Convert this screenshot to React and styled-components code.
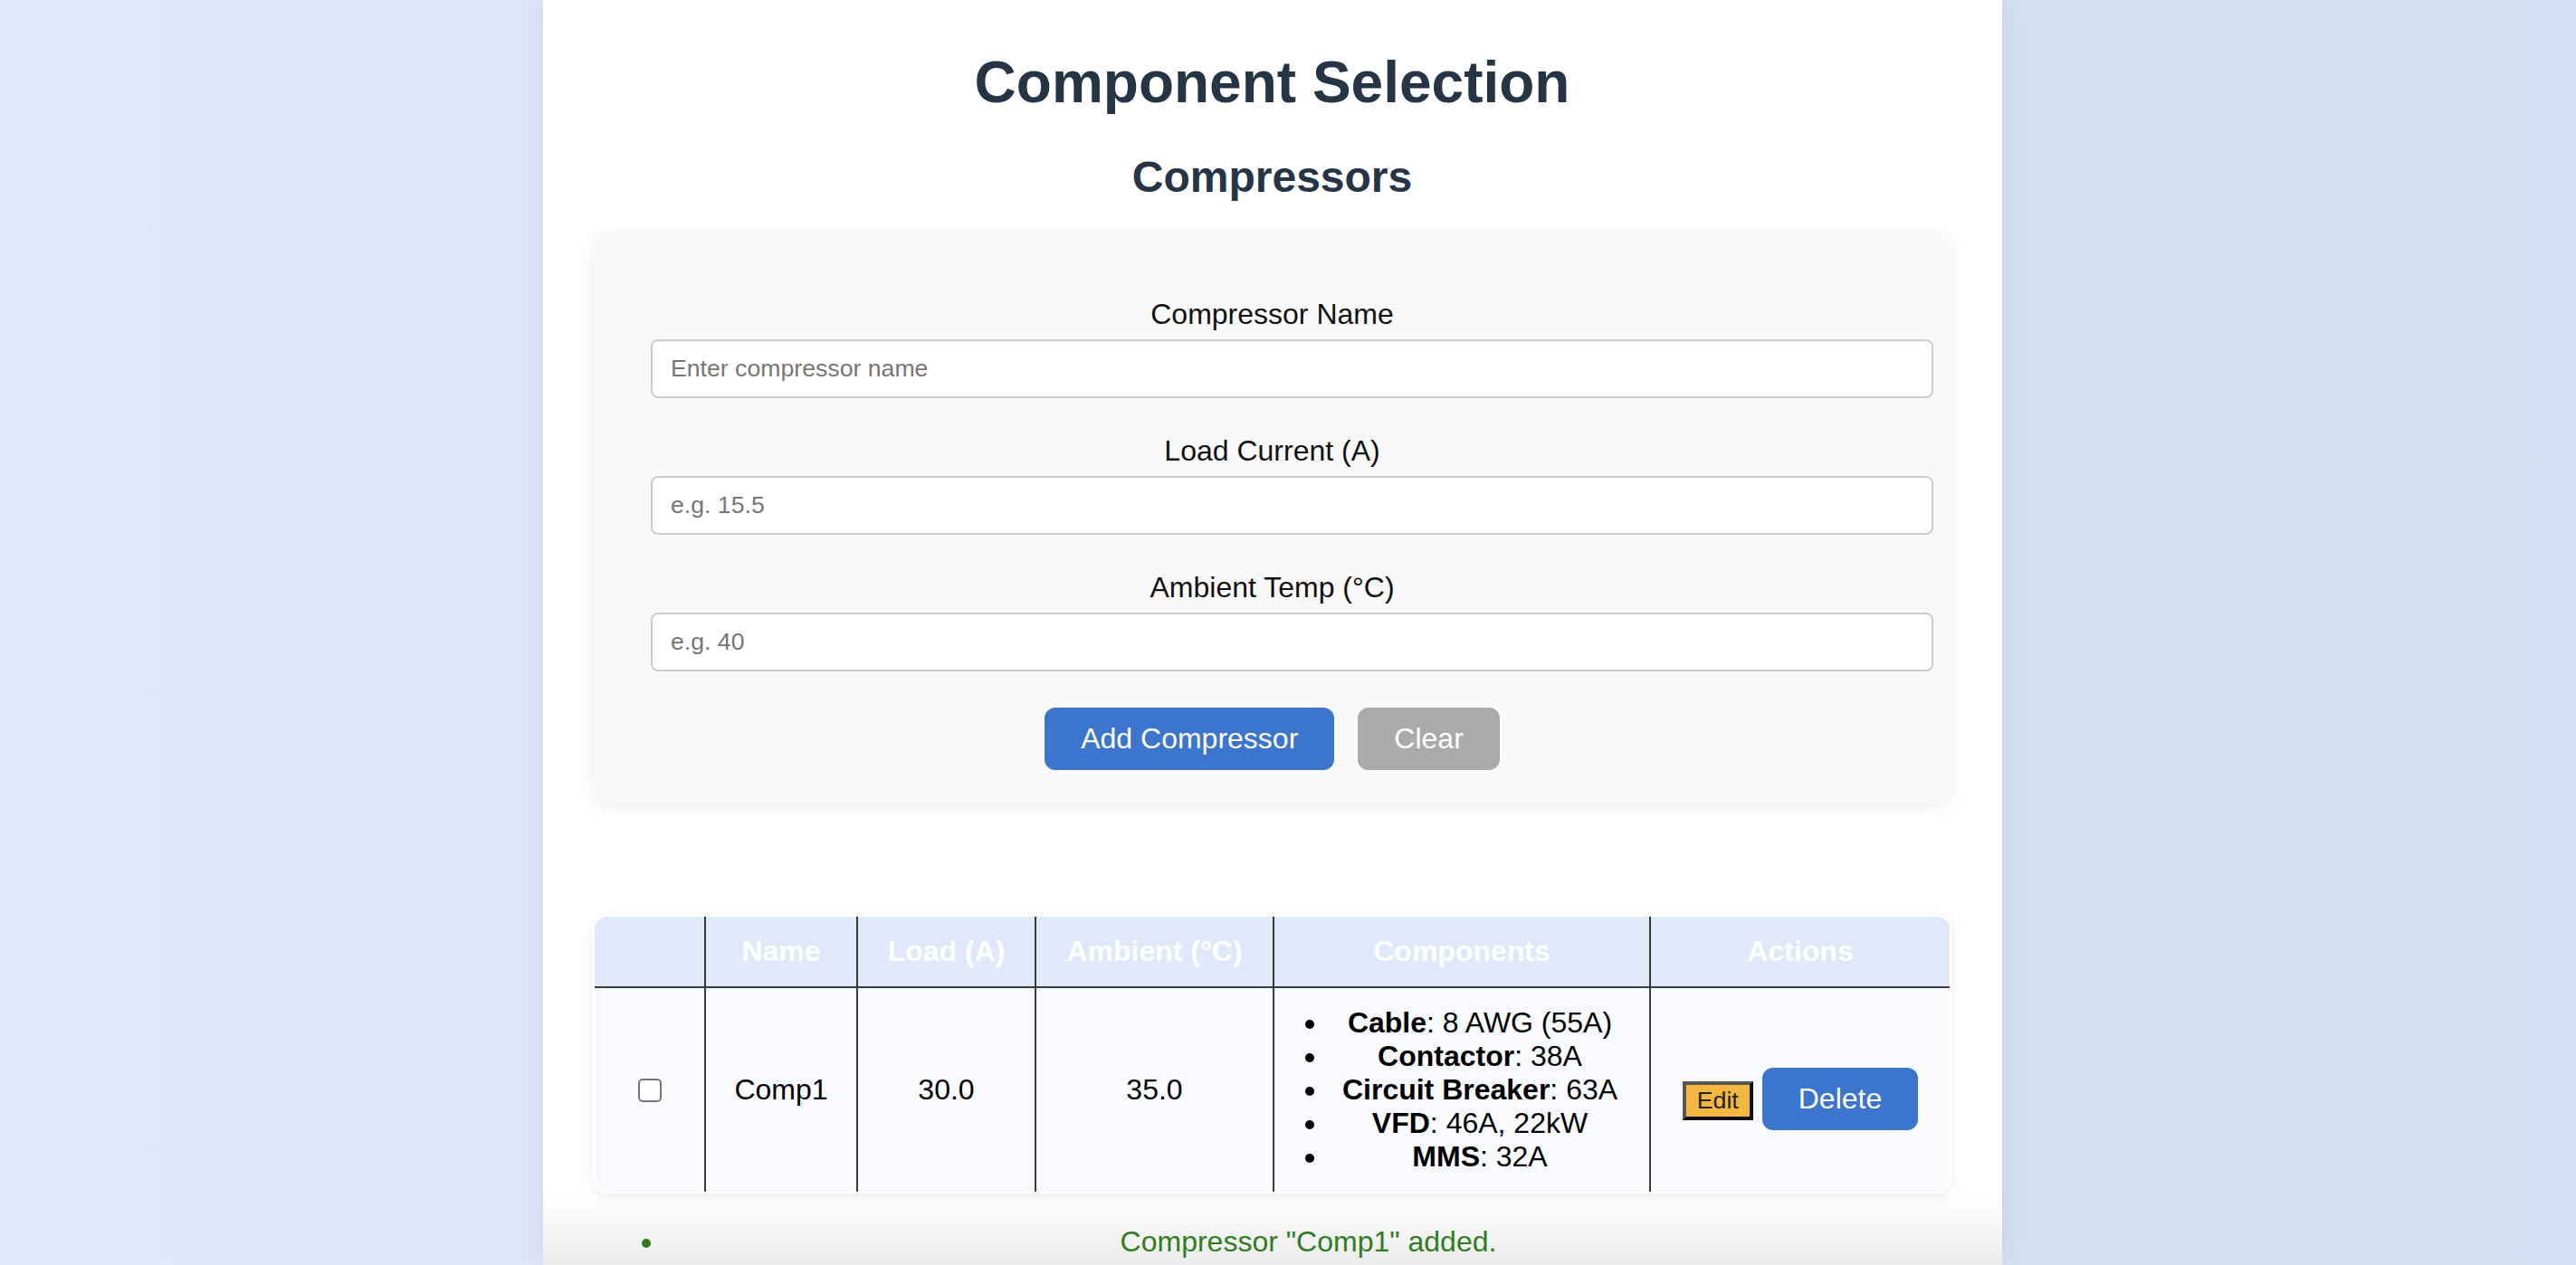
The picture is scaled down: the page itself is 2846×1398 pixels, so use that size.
import React from "react";
import styled, { createGlobalStyle } from "styled-components";

const GlobalStyle = createGlobalStyle`
  html, body {
    margin: 0;
    padding: 0;
  }
  body {
    height: 1398px;
    overflow: hidden;
    font-family: "Liberation Sans", Arial, Helvetica, sans-serif;
    background: linear-gradient(to right, #e1e8f9 0%, #dfe7f7 35%, #d8e2f4 70%, #d3dff2 100%);
  }
`;

const Page = styled.div`
  display: flex;
  justify-content: center;
  padding-right: 34px;
  height: 1398px;
`;

const Container = styled.main`
  box-sizing: border-box;
  width: 1612px;
  height: 1398px;
  overflow: hidden;
  padding: 54px 56px 0 55px;
  background: linear-gradient(to bottom, #ffffff 0px, #ffffff 1320px, #ebebeb 1398px);
  box-shadow: 0 0 36px rgba(40, 60, 110, 0.12);
`;

const Title = styled.h1`
  margin: 0;
  font-size: 64px;
  line-height: normal;
  font-weight: 700;
  color: #263545;
  text-align: center;
`;

const Subtitle = styled.h2`
  margin: 40px 0 32px;
  font-size: 48px;
  line-height: normal;
  font-weight: 700;
  color: #263545;
  text-align: center;
`;

const FormCard = styled.section`
  box-sizing: border-box;
  width: 100%;
  background: #f9f9f9;
  border-radius: 16px;
  box-shadow: 0 4px 18px rgba(0, 0, 0, 0.07);
  padding: 74px 64px 37px;
`;

const Field = styled.div`
  margin-bottom: ${(p) => (p.$last ? "0" : "40px")};
`;

const Label = styled.label`
  display: block;
  text-align: center;
  font-size: 32px;
  line-height: normal;
  color: #111;
  margin-bottom: 9px;
`;

const TextInput = styled.input`
  display: block;
  box-sizing: content-box;
  width: 100%;
  padding: 15px 20px;
  border: 2px solid #cccccc;
  border-radius: 8px;
  background: #fff;
  font-family: "Liberation Sans", Arial, sans-serif;
  font-size: 26.67px;
  line-height: normal;
  color: #222;
  outline: none;
  &::placeholder {
    color: #767676;
  }
`;

const ButtonRow = styled.div`
  display: flex;
  justify-content: center;
  gap: 26px;
  margin-top: 40px;
`;

const Button = styled.button`
  font-family: "Liberation Sans", Arial, sans-serif;
  font-size: 32px;
  line-height: normal;
  padding: 16px 40px;
  border: none;
  border-radius: 12px;
  color: #fff;
  background: ${(p) => (p.$variant === "gray" ? "#aaaaaa" : "#3b75cd")};
  margin-top: ${(p) => (p.$offset ? "20px" : "0")};
  cursor: pointer;
`;

const EditButton = styled.button`
  font-family: "Liberation Sans", Arial, sans-serif;
  font-size: 26.67px;
  line-height: normal;
  padding: 2px 12px;
  border-style: solid;
  border-width: 4px;
  border-color: #555 #111 #111 #555;
  background: #f4b73f;
  color: #222;
  cursor: pointer;
`;

const TableWrap = styled.div`
  margin-top: 123px;
  border: 2px solid #fff;
  border-radius: 16px;
  overflow: hidden;
  box-shadow: 0 4px 16px rgba(0, 0, 0, 0.08);
`;

const Table = styled.table`
  width: 100%;
  border-collapse: collapse;
  table-layout: fixed;
`;

const Th = styled.th`
  background: #e1e8fa;
  color: #ffffff;
  font-size: 32px;
  font-weight: 700;
  line-height: normal;
  padding: 20px;
  text-align: center;
  border-bottom: 2px solid #3a3a3a;
  border-left: ${(p) => (p.$first ? "none" : "2px solid #3a3a3a")};
`;

const Td = styled.td`
  background: #f8fafd;
  color: #000;
  font-size: 32px;
  line-height: normal;
  padding: 20px;
  text-align: center;
  vertical-align: middle;
  border-left: ${(p) => (p.$first ? "none" : "2px solid #3a3a3a")};
`;

const Check = styled.input`
  appearance: none;
  display: block;
  margin: 0 auto;
  width: 26px;
  height: 26px;
  box-sizing: border-box;
  border: 2px solid #767676;
  border-radius: 5px;
  background: #fff;
`;

const CompList = styled.ul`
  margin: 0;
  padding-left: 40px;
  list-style: disc;
  text-align: center;
`;

const CompItem = styled.li`
  line-height: normal;
`;

const ActionGroup = styled.div`
  display: flex;
  justify-content: center;
  align-items: baseline;
  gap: 10px;
`;

const Messages = styled.ul`
  margin: 35px 0 0;
  padding-left: 80px;
  color: #2f7d1f;
  font-size: 32px;
  line-height: normal;
`;

const Message = styled.li`
  text-align: center;
`;

const columns = [122, 168, 197, 263, 416, 331];

const components = [
  ["Cable", "8 AWG (55A)"],
  ["Contactor", "38A"],
  ["Circuit Breaker", "63A"],
  ["VFD", "46A, 22kW"],
  ["MMS", "32A"],
];

export default function App() {
  return (
    <>
      <GlobalStyle />
      <Page>
        <Container>
          <Title>Component Selection</Title>
          <Subtitle>Compressors</Subtitle>
          <FormCard>
            <Field>
              <Label>Compressor Name</Label>
              <TextInput type="text" placeholder="Enter compressor name" />
            </Field>
            <Field>
              <Label>Load Current (A)</Label>
              <TextInput type="text" placeholder="e.g. 15.5" />
            </Field>
            <Field $last>
              <Label>Ambient Temp (°C)</Label>
              <TextInput type="text" placeholder="e.g. 40" />
            </Field>
            <ButtonRow>
              <Button>Add Compressor</Button>
              <Button $variant="gray">Clear</Button>
            </ButtonRow>
          </FormCard>

          <TableWrap>
            <Table>
              <colgroup>
                {columns.map((w, i) => (
                  <col key={i} style={{ width: w }} />
                ))}
              </colgroup>
              <thead>
                <tr>
                  <Th $first></Th>
                  <Th>Name</Th>
                  <Th>Load (A)</Th>
                  <Th>Ambient (°C)</Th>
                  <Th>Components</Th>
                  <Th>Actions</Th>
                </tr>
              </thead>
              <tbody>
                <tr>
                  <Td $first>
                    <Check type="checkbox" />
                  </Td>
                  <Td>Comp1</Td>
                  <Td>30.0</Td>
                  <Td>35.0</Td>
                  <Td>
                    <CompList>
                      {components.map(([k, v]) => (
                        <CompItem key={k}>
                          <b>{k}</b>: {v}
                        </CompItem>
                      ))}
                    </CompList>
                  </Td>
                  <Td>
                    <ActionGroup>
                      <EditButton>Edit</EditButton>
                      <Button $offset>Delete</Button>
                    </ActionGroup>
                  </Td>
                </tr>
              </tbody>
            </Table>
          </TableWrap>

          <Messages>
            <Message>Compressor "Comp1" added.</Message>
          </Messages>
        </Container>
      </Page>
    </>
  );
}
